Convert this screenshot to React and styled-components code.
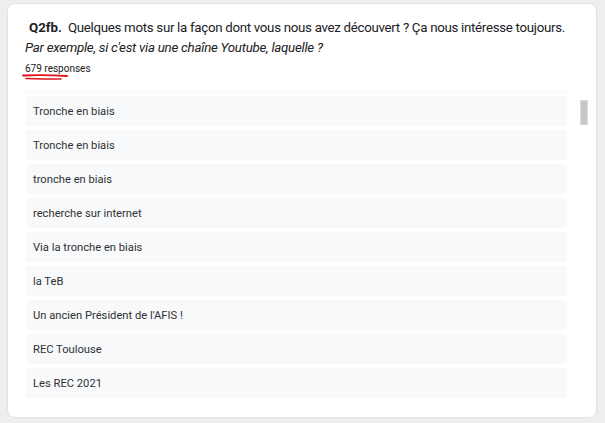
import React from "react";
import styled, { createGlobalStyle } from "styled-components";

const Global = createGlobalStyle`
  html, body { margin: 0; padding: 0; background: #eeeeee; }
  body { font-family: Roboto, "Noto Sans", Arial, sans-serif; }
  * { box-sizing: border-box; }
`;

const Page = styled.div`
  width: 605px;
  height: 423px;
  padding: 3px 8px 5px 7px;
  background: #eeeeee;
`;

const Card = styled.div`
  height: 415px;
  background: #fff;
  border-radius: 8px;
  border: 1px solid #e2e2e2;
  padding: 14px 0 0 17px;
  display: flex;
  flex-direction: column;
`;

const Title = styled.div`
  font-size: 13.3px;
  line-height: 20px;
  letter-spacing: -0.3px;
  color: #202124;
  padding-left: 4px;
  b { font-weight: 700; margin-right: 3px; letter-spacing: 0; }
`;

const Subtitle = styled.div`
  font-size: 13.3px;
  line-height: 20px;
  letter-spacing: -0.25px;
  font-style: italic;
  color: #202124;
`;

const Count = styled.div`
  margin-top: 4px;
  font-size: 10px;
  line-height: 13px;
  color: #202124;
  position: relative;
  width: fit-content;
`;

const Scribble = styled.svg`
  position: absolute;
  left: -3px;
  top: 12px;
  overflow: visible;
`;

const ListArea = styled.div`
  margin-top: 16px;
  display: flex;
  gap: 13px;
  height: 307px;
  overflow: hidden;
`;

const List = styled.div`
  width: 542px;
  display: flex;
  flex-direction: column;
  gap: 4px;
  padding-left: 1px;
`;

const Sliver = styled.div`
  height: 1px;
  flex: none;
  background: #f5f6f7;
`;

const Row = styled.div`
  height: 30px;
  flex: none;
  background: #f8f9fa;
  border-radius: 3px;
  display: flex;
  align-items: center;
  padding-left: 7px;
  font-size: 11.2px;
  color: #303134;
`;

const Track = styled.div`
  width: 8px;
  padding-top: 9px;
`;

const Thumb = styled.div`
  width: 8px;
  height: 25px;
  background: #c6c6c6;
  border: 1px solid #dadada;
`;

const answers = [
  "Tronche en biais",
  "Tronche en biais",
  "tronche en biais",
  "recherche sur internet",
  "Via la tronche en biais",
  "la TeB",
  "Un ancien Président de l'AFIS !",
  "REC Toulouse",
  "Les REC 2021",
];

export default function App() {
  return (
    <>
      <Global />
      <Page>
        <Card>
          <Title>
            <b>Q2fb.</b> Quelques mots sur la façon dont vous nous avez découvert ? Ça nous intéresse toujours.
          </Title>
          <Subtitle>Par exemple, si c'est via une chaîne Youtube, laquelle ?</Subtitle>
          <Count>
            679 responses
            <Scribble width="50" height="10" viewBox="0 0 50 10">
              <path d="M1 1.5 Q22 0.5 45 2" stroke="#e0141c" strokeWidth="1.8" fill="none" strokeLinecap="round" />
              <path d="M4 4.5 Q20 5 39 5" stroke="#e0141c" strokeWidth="1.5" fill="none" strokeLinecap="round" />
            </Scribble>
          </Count>
          <ListArea>
            <List>
              <Sliver />
              {answers.map((a, i) => (
                <Row key={i}>{a}</Row>
              ))}
            </List>
            <Track>
              <Thumb />
            </Track>
          </ListArea>
        </Card>
      </Page>
    </>
  );
}
